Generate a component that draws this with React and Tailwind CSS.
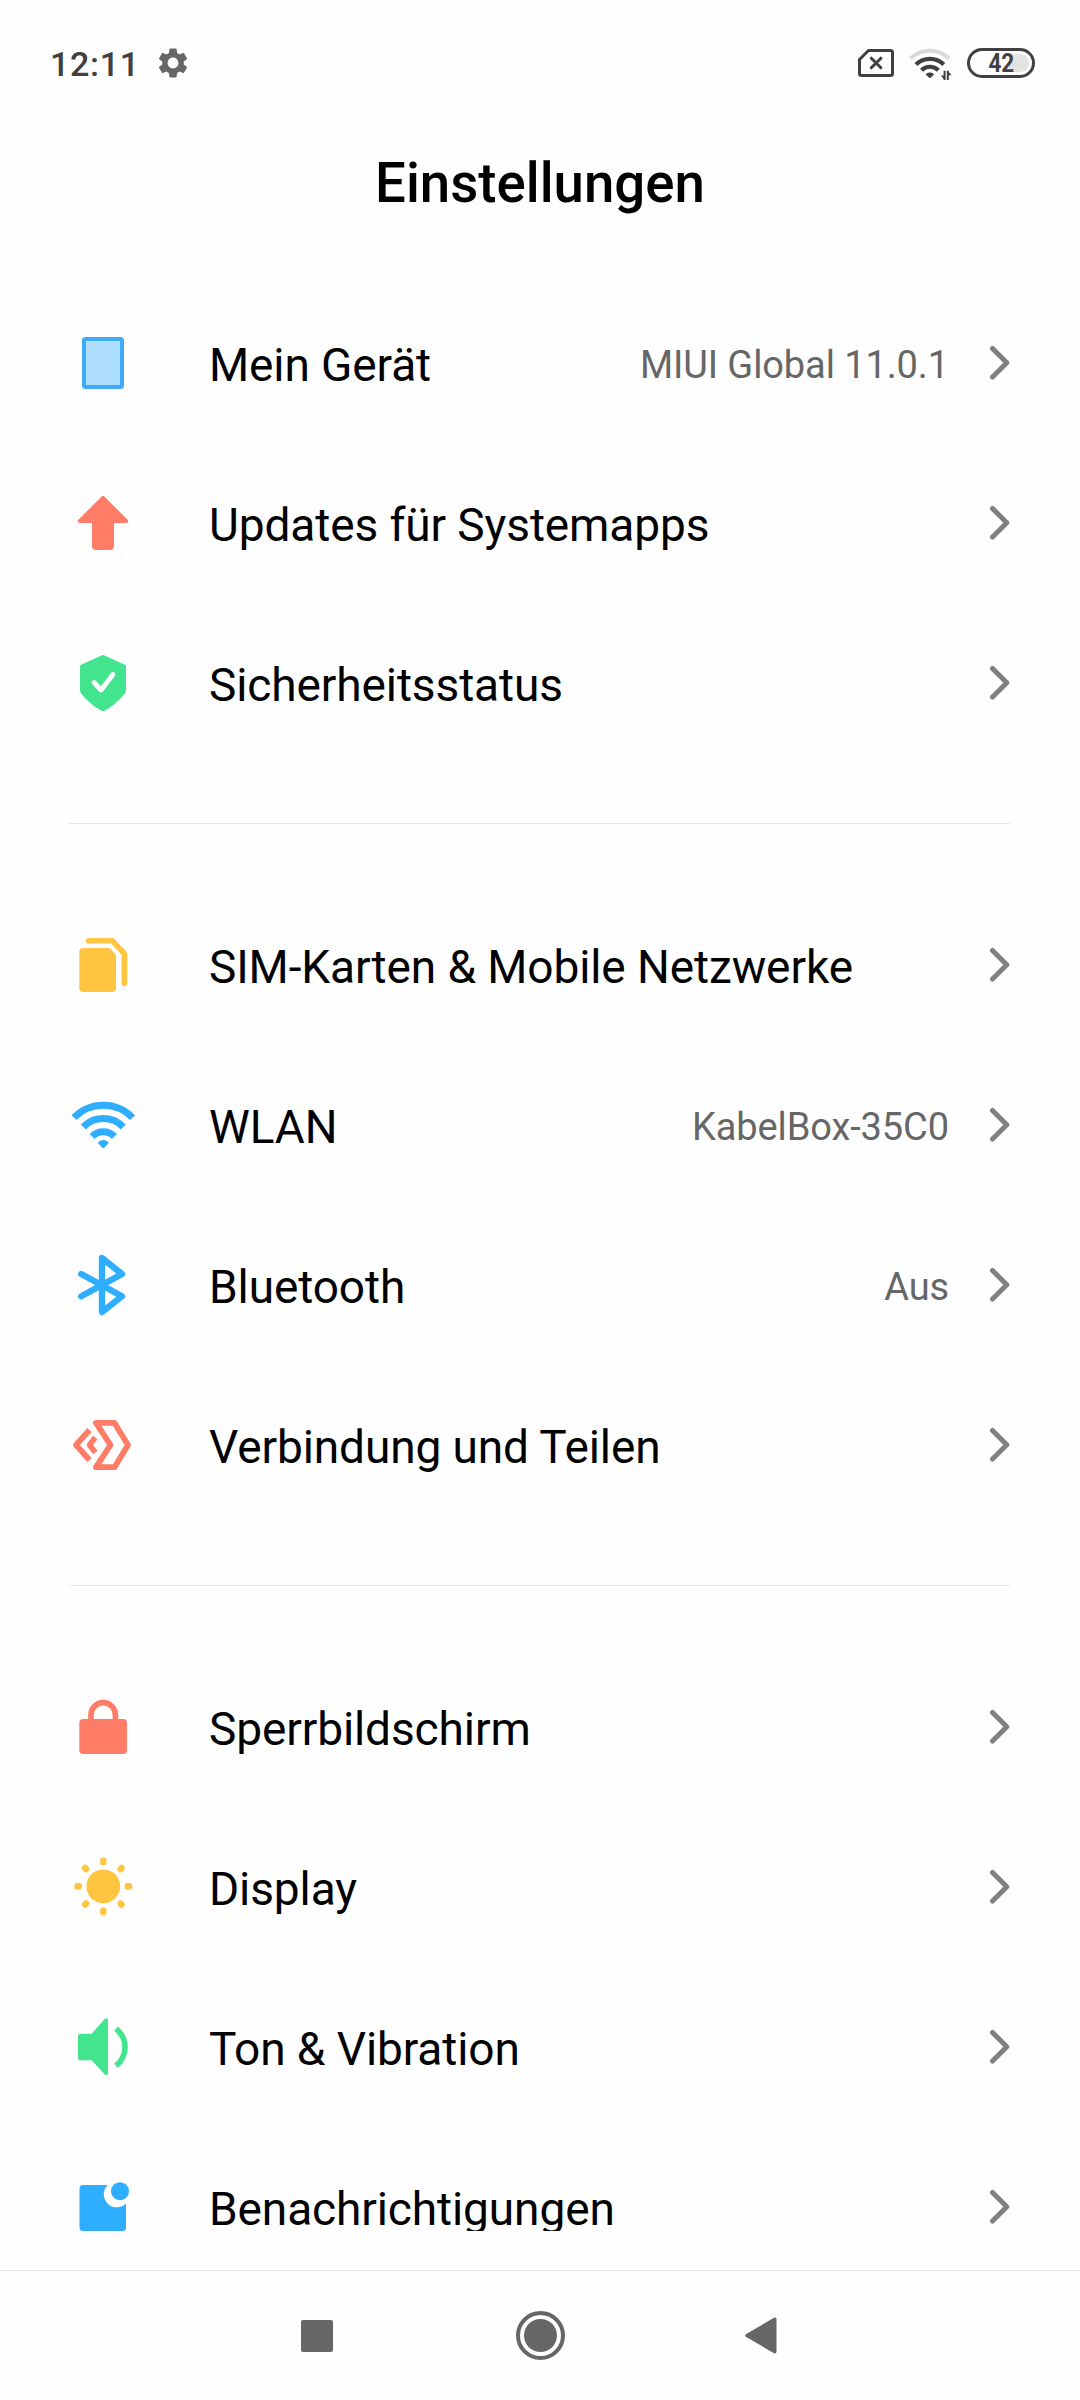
import { MdSettings } from 'react-icons/md';

const blue = '#2faeff';
const coral = '#ff7d66';
const green = '#42e58e';
const yellow = '#ffc440';

const icons = {
  device: (
    <rect x="17" y="12" width="38" height="48" rx="1.5" fill="#aedfff" stroke="#3fabf6" strokeWidth="4" />
  ),
  update: (
    <path
      d="M34.4 9.7a2.2 2.2 0 0 1 3.2 0L60.4 32.6c1.6 1.6.8 3.4-1.4 3.4H47v23a4 4 0 0 1-4 4H29a4 4 0 0 1-4-4V36H13c-2.2 0-3-1.8-1.4-3.4z"
      fill={coral}
    />
  ),
  security: (
    <>
      <path
        d="M34.5 8.4a3 3 0 0 1 3 0L58 17.8q1 .5 1 1.7V43q0 2-1.2 3.4C52 54 44 60 37.8 63.5a3.6 3.6 0 0 1-3.6 0C28 60 20 54 14.2 46.4Q13 45 13 43V19.5q0-1.2 1-1.7z"
        fill={green}
      />
      <path d="M27 35.5l7 7.500 12-15.500" fill="none" stroke="#fff" strokeWidth="4.8" strokeLinecap="round" strokeLinejoin="round" />
    </>
  ),
  sim: (
    <>
      <path d="M16.3 19H41q1.5 0 2.5 1l4.5 4.5q1 1 1 2.5v32a4 4 0 0 1-4 4H16.3a4 4 0 0 1-4-4V23a4 4 0 0 1 4-4z" fill={yellow} />
      <path d="M21.7 11.700h23.500l12.200 13v29.600" fill="none" stroke={yellow} strokeWidth="5.6" strokeLinecap="round" strokeLinejoin="round" />
    </>
  ),
  wifi: (
    <>
      <g fill="none" stroke={blue} strokeWidth="7">
        <path d="M7 28.7a40.500 40.500 0 0 1 58.600 0" />
        <path d="M16.3 38a28 28 0 0 1 40 0" />
        <path d="M25.2 47.5a15.500 15.500 0 0 1 22.200 0" />
      </g>
      <path d="M31.5 52.8q4.800-3.600 9.600 0 .8 1 0 2l-3.600 3.700q-1.200 1-2.400 0l-3.600-3.700q-.8-1 0-2z" fill={blue} />
    </>
  ),
  bluetooth: (
    <path
      d="M14.3 25L55 47.3 35 63V9l20 16-40.700 22.300"
      fill="none"
      stroke={blue}
      strokeWidth="6.4"
      strokeLinecap="round"
      strokeLinejoin="round"
    />
  ),
  share: (
    <g fill="none" stroke={coral} strokeWidth="5.8">
      <path d="M29 13.9h18.500L61 36 47.5 58.200H29L43.5 36z" strokeLinejoin="round" />
      <path d="M22.5 21L9 36l13.500 15" strokeLinejoin="round" />
      <path d="M28.3 28.500L22.5 36l5.800 7.500" strokeWidth="5.6" strokeLinejoin="round" />
    </g>
  ),
  lock: (
    <>
      <rect x="12.3" y="28" width="47.7" height="35" rx="4" fill={coral} />
      <path d="M24 29v-5.200a12.200 12.200 0 0 1 24.400 0V29" fill="none" stroke={coral} strokeWidth="5.6" />
    </>
  ),
  display: (
    <>
      <circle cx="36.3" cy="35.3" r="16.9" fill={yellow} />
      {[0, 45, 90, 135, 180, 225, 270, 315].map(angle => (
        <rect
          key={angle}
          x="33.1"
          y="6.4"
          width="6.4"
          height="7.6"
          rx="2.6"
          fill={yellow}
          transform={`rotate(${angle} 36.3 35.3)`}
        />
      ))}
    </>
  ),
  sound: (
    <>
      <path d="M13.5 22.700h11.200L37.5 8.300Q38.5 7.300 39.5 7.300 41 7.300 41 9v53.600q0 1.700-1.500 1.700-1 0-2-1L24.7 49.300H13.5a2.500 2.500 0 0 1-2.500-2.500V25.200a2.500 2.500 0 0 1 2.500-2.500z" fill={green} />
      <path d="M49 17.700c12 9.600 12 27.400 0 37" fill="none" stroke={green} strokeWidth="5.6" />
    </>
  ),
  notifications: (
    <>
      <path d="M16 14h24.700A13 13 0 0 0 59 32.600V56.500a3.500 3.500 0 0 1-3.500 3.500H16a3.500 3.500 0 0 1-3.500-3.500v-39A3.500 3.500 0 0 1 16 14z" fill={blue} />
      <circle cx="53" cy="20.2" r="9" fill={blue} />
    </>
  )
};

const sections = [
  [
    { label: 'Mein Gerät', icon: 'device', value: 'MIUI Global 11.0.1' },
    { label: 'Updates für Systemapps', icon: 'update' },
    { label: 'Sicherheitsstatus', icon: 'security' }
  ],
  [
    { label: 'SIM-Karten & Mobile Netzwerke', icon: 'sim' },
    { label: 'WLAN', icon: 'wifi', value: 'KabelBox-35C0' },
    { label: 'Bluetooth', icon: 'bluetooth', value: 'Aus' },
    { label: 'Verbindung und Teilen', icon: 'share' }
  ],
  [
    { label: 'Sperrbildschirm', icon: 'lock' },
    { label: 'Display', icon: 'display' },
    { label: 'Ton & Vibration', icon: 'sound' },
    { label: 'Benachrichtigungen', icon: 'notifications' }
  ]
];

function StatusBar() {
  return (
    <header className="flex h-[126px] shrink-0 items-center justify-between pl-[50px] pr-[45px]">
      <div className="flex items-center">
        <span className="pt-[2px] text-[34px] leading-10 font-medium tracking-[0.7px] text-[#404040]">12:11</span>
        <MdSettings className="ml-[15px] size-9 text-[#666]" />
      </div>
      <div className="flex items-center">
        <svg className="h-[30px] w-9" viewBox="0 0 36 30" fill="none" stroke="#404040" strokeWidth="3" strokeLinejoin="round">
          <path d="M10.5 2.500H32.500a2 2 0 0 1 2 2V25.500a2 2 0 0 1-2 2H3.500a2 2 0 0 1-2-2V11.500z" />
          <path d="M13.3 10.200l9.600 9.600m0-9.600l-9.600 9.600" strokeLinecap="round" />
        </svg>
        <svg className="mt-[2px] ml-[15px] h-8 w-[43px]" viewBox="0 0 43 32" fill="none">
          <path d="M1.5 10.500a28 28 0 0 1 38.600 0" stroke="#d9d9d9" strokeWidth="4" />
          <g stroke="#404040" strokeWidth="4.2">
            <path d="M7 16.500a20 20 0 0 1 27.800 0" />
            <path d="M12.5 22.200a12 12 0 0 1 16.800 0" />
          </g>
          <path d="M17.2 25.700q3.700-2.400 7.400 0 .6.700 0 1.400L21.600 29.800q-.7.500-1.400 0L17.200 27.100q-.6-.7 0-1.400z" fill="#404040" />
          <path d="M35.6 22.800v9.200M38.800 32V22.800" stroke="#404040" strokeWidth="2" />
          <path d="M31.800 27.500h3.800v4.500zM42.600 27.300h-3.800v-4.500z" fill="#404040" />
        </svg>
        <div className="ml-[15px] flex h-[30px] w-[68px] items-center justify-center rounded-full border-[3px] border-[#404040]">
          <div className="flex h-[18px] w-14 items-center justify-center rounded-full bg-linear-to-r from-transparent from-65% to-[#e3e3e3] to-65%">
            <span className="scale-x-[0.9] text-[25px] leading-none font-bold text-[#404040]">42</span>
          </div>
        </div>
      </div>
    </header>
  );
}

function SettingsRow({ item }) {
  return (
    <li className="flex h-40 items-center pl-[67px] pr-[68px]">
      <svg className="size-[72px] shrink-0" viewBox="0 0 72 72">
        {icons[item.icon]}
      </svg>
      <span className="ml-[70px] grow pt-[3px] text-[46px] leading-[56px] tracking-[-0.1px] text-black">{item.label}</span>
      {item.value && (
        <span className="pt-[3px] text-[38px] leading-[46px] tracking-[-0.1px] text-[#666]">{item.value}</span>
      )}
      <svg className="ml-[37px] h-9 w-[26px] shrink-0" viewBox="0 0 26 36">
        <path d="M6.5 3.500L20.800 17.800 6.500 32" fill="none" stroke="#808080" strokeWidth="5" strokeLinecap="round" strokeLinejoin="round" />
      </svg>
    </li>
  );
}

function NavigationBar() {
  return (
    <nav className="flex h-[130px] shrink-0 items-center justify-center gap-[175px] border-t border-[#e3e3e3]">
      <div className="flex w-12 justify-center">
        <div className="size-8 rounded-[2px] bg-[#666]" />
      </div>
      <div className="flex size-[49px] items-center justify-center rounded-full border-4 border-[#666]">
        <div className="size-[33px] rounded-full bg-[#666]" />
      </div>
      <svg className="h-[37px] w-12" viewBox="2.5 0 48 37">
        <path d="M8.7 17.100L36.500.8Q39 0 39 2.500v32q0 2.500-2.500 1.700L8.700 19.900q-2-1.400 0-2.800z" fill="#666" />
      </svg>
    </nav>
  );
}

export default function App() {
  return (
    <div className="flex h-[2400px] w-[1080px] flex-col overflow-hidden bg-[#fefefe] font-['Roboto',sans-serif]">
      <StatusBar />
      <h1 className="flex h-[157px] shrink-0 items-start justify-center pt-[25px] text-[54.6px] leading-[64px] font-medium text-black">
        Einstellungen
      </h1>
      <main className="h-[1948px] shrink-0 overflow-hidden">
        {sections.map((items, index) => (
          <section key={index}>
            {index > 0 && <hr className="mt-[60px] mr-[70px] mb-[61px] ml-[69px] border-t border-[#e6e6e6]" />}
            <ul>
              {items.map(item => (
                <SettingsRow key={item.label} item={item} />
              ))}
            </ul>
          </section>
        ))}
      </main>
      <div className="grow" />
      <NavigationBar />
    </div>
  );
}
